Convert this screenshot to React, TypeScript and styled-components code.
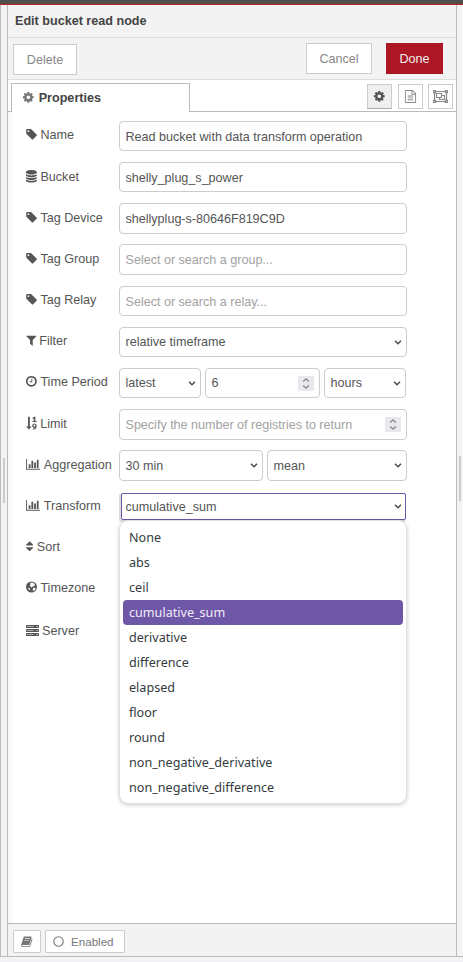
import React from 'react';
import styled, { createGlobalStyle, css } from 'styled-components';

const GlobalStyle = createGlobalStyle`
  * { box-sizing: border-box; }
  body {
    margin: 0;
    background: #f3f3f5;
    color: #555;
    font: 12.6px/18px "Liberation Sans", Arial, sans-serif;
  }
`;

/* ---------- icons ---------- */

const Glyph = styled.svg<{ $w?: number; $h?: number }>`
  display: block;
  flex: none;
  width: ${p => p.$w ?? 12.6}px;
  height: ${p => p.$h ?? 12.6}px;
  fill: currentColor;
`;

const paths = {
  tag: 'M576 448q0-53-37.5-90.5t-90.5-37.5-90.5 37.5-37.5 90.5 37.5 90.5 90.5 37.5 90.5-37.5 37.5-90.5zm1067 576q0 53-37 90l-491 492q-39 37-91 37-53 0-90-37l-715-716q-38-37-64.5-101t-26.5-117v-416q0-52 38-90t90-38h416q53 0 117 26.5t102 64.5l715 714q37 39 37 91z',
  database: 'M896 768q237 0 443-43t325-127v170q0 69-103 128t-280 93.5-385 34.5-385-34.5-280-93.5-103-128v-170q119 84 325 127t443 43zm0 768q237 0 443-43t325-127v170q0 69-103 128t-280 93.5-385 34.5-385-34.5-280-93.5-103-128v-170q119 84 325 127t443 43zm0-384q237 0 443-43t325-127v170q0 69-103 128t-280 93.5-385 34.5-385-34.5-280-93.5-103-128v-170q119 84 325 127t443 43zm0-1152q208 0 385 34.5t280 93.5 103 128v128q0 69-103 128t-280 93.5-385 34.5-385-34.5-280-93.5-103-128v-128q0-69 103-128t280-93.5 385-34.5z',
  filter: 'M1595 295q17 41-14 70l-493 493v742q0 42-39 59-13 5-25 5-27 0-45-19l-256-256q-19-19-19-45v-486l-493-493q-31-29-14-70 17-39 59-39h1280q42 0 59 39z',
  clock: 'M1024 544v448q0 14-9 23t-23 9h-320q-14 0-23-9t-9-23v-64q0-14 9-23t23-9h224v-352q0-14 9-23t23-9h64q14 0 23 9t9 23zm416 352q0-148-73-273t-198-198-273-73-273 73-198 198-73 273 73 273 198 198 273 73 273-73 198-198 73-273zm224 0q0 209-103 385.5t-279.5 279.5-385.5 103-385.5-103-279.5-279.5-103-385.5 103-385.5 279.5-279.5 385.5-103 385.5 103 279.5 279.5 103 385.5z',
  cog: 'M1152 896q0-106-75-181t-181-75-181 75-75 181 75 181 181 75 181-75 75-181zm512-109v222q0 12-8 23t-20 13l-185 28q-19 54-39 91 35 50 107 138 10 12 10 25t-9 23q-27 37-99 108t-94 71q-12 0-26-9l-138-108q-44 23-91 38-16 136-29 186-7 28-36 28h-222q-14 0-24.500-8.500t-11.500-21.500l-28-184q-49-16-90-37l-141 107q-10 9-25 9-14 0-25-11-126-114-165-168-7-10-7-23 0-12 8-23 15-21 51-66.500t54-70.500q-27-50-41-99l-183-27q-13-2-21-12.500t-8-23.500v-222q0-12 8-23t19-13l186-28q14-46 39-92-40-57-107-138-10-12-10-24 0-10 9-23 26-36 98.500-107.500t94.500-71.500q13 0 26 10l138 107q44-23 91-38 16-136 29-186 7-28 36-28h222q14 0 24.500 8.500t11.500 21.500l28 184q49 16 90 37l142-107q9-9 24-9 13 0 25 10 129 119 165 170 7 8 7 22 0 12-8 23-15 21-51 66.500t-54 70.500q26 50 41 98l183 28q13 2 21 12.500t8 23.500z',
  file: 'M1596 380q28 28 48 76t20 88v1152q0 40-28 68t-68 28h-1344q-40 0-68-28t-28-68v-1600q0-40 28-68t68-28h896q40 0 88 20t76 48zm-444-244v376h376q-10-29-22-41l-313-313q-12-12-41-22zm384 1528v-1024h-416q-40 0-68-28t-28-68v-416h-768v1536h1280zm-1024-864q0-14 9-23t23-9h704q14 0 23 9t9 23v64q0 14-9 23t-23 9h-704q-14 0-23-9t-9-23v-64zm736 224q14 0 23 9t9 23v64q0 14-9 23t-23 9h-704q-14 0-23-9t-9-23v-64q0-14 9-23t23-9h704zm0 256q14 0 23 9t9 23v64q0 14-9 23t-23 9h-704q-14 0-23-9t-9-23v-64q0-14 9-23t23-9h704z',
};

const TagIcon = () => <Glyph viewBox="100 0 1792 1792"><path d={paths.tag} /></Glyph>;
const DatabaseIcon = () => <Glyph viewBox="128 0 1792 1792"><path d={paths.database} /></Glyph>;
const FilterIcon = () => <Glyph viewBox="128 0 1792 1792"><path d={paths.filter} /></Glyph>;
const ClockIcon = () => <Glyph viewBox="128 0 1792 1792"><path d={paths.clock} /></Glyph>;
const CogIcon = () => <Glyph viewBox="0 0 1792 1792"><path d={paths.cog} /></Glyph>;
const ChartIcon = () => (
  <Glyph $w={14.4} viewBox="0 0 2048 1792">
    <path d="M640 896v512h-256v-512h256zm384-512v1024h-256v-1024h256zm1024 1152v128h-2048v-1536h128v1408h1920zm-640-896v768h-256v-768h256zm384-384v1152h-256v-1152h256z" />
  </Glyph>
);
const SortIcon = () => (
  <Glyph $w={7.2} viewBox="384 0 1024 1792">
    <path d="M1408 1088q0 26-19 45l-448 448q-19 19-45 19t-45-19l-448-448q-19-19-19-45t19-45 45-19h896q26 0 45 19t19 45zm0-384q0 26-19 45t-45 19h-896q-26 0-45-19t-19-45 19-45l448-448q19-19 45-19t45 19l448 448q19 19 19 45z" />
  </Glyph>
);
const NumericIcon = () => (
  <Glyph $w={11} $h={14} viewBox="0 0 11 14">
    <path d="M2 .8h1.800v9.600h1.900L2.900 13.400.1 10.400H2z" />
    <path d="M6.500 2 8.100.8h1.300v4.100h1.200v1.100H6.500V4.900h1.300V2.500l-1.300.6z" />
    <path fillRule="evenodd" d="M8.400 7.400c1.400 0 2.200 1.100 2.200 2.700 0 2.200-1 3.500-2.700 3.500l-1.200-.2.300-1c1.200.3 1.900 0 2.100-.9-1.500.6-2.900-.2-2.900-1.800 0-1.300.9-2.300 2.200-2.300zm0 1.100c-.6 0-.9.5-.9 1.100s.4.900 1 .9.800-.3.800-.8c0-.7-.4-1.200-.9-1.200z" />
  </Glyph>
);
const GlobeIcon = () => (
  <Glyph $w={11} $h={12} viewBox="0 0 11 12">
    <path fillRule="evenodd" d="M5.500.5a5.500 5.500 0 1 1 0 11 5.500 5.500 0 0 1 0-11zM4.600 1.700 5.800 1.400 7 1.800 8.200 2.500 8.900 3.500 8.200 4 9 4.700 8.200 5.200 7 4.900 6.300 6 5.300 6.600 4.600 6 5.200 4.900 4.200 5.200 3.700 4.300 4.600 3.400 4.100 2.600zM7.300 6.600 9 7 9.700 7.500 8.900 9 7.500 10 6.700 9.300 7 8.300zM2 6.400 3.500 7 4.200 8.100 3.800 9.200 2.900 8.400z" />
  </Glyph>
);
const ServerIcon = () => (
  <Glyph $w={13} $h={11} viewBox="0 0 13 11">
    {[0, 4, 8].map(y => (
      <g key={y}>
        <rect x="0" y={y} width="13" height="3" rx=".4" />
        <rect x="1" y={y + 1} width="6.500" height="1" fill="#fff" opacity=".5" />
        <rect x="10.500" y={y + 1} width="1.300" height="1" fill="#fff" opacity=".8" />
      </g>
    ))}
  </Glyph>
);
const GroupIcon = () => (
  <Glyph $w={15} $h={13} viewBox="0 0 15 13">
    <g fill="none" stroke="currentColor" strokeWidth="1.200">
      <path d="M3 1.500h9M3 11.500h9M1.500 3v7M13.500 3v7" />
      <path d="M.6.600h2v2h-2zM12.400.600h2v2h-2zM.6 10.400h2v2h-2zM12.400 10.400h2v2h-2z" />
      <path d="M3.500 3.500h5v4h-5zM9 5.500h2.500v4h-5V8" />
    </g>
  </Glyph>
);
const BookIcon = () => (
  <Glyph $w={12} $h={11} viewBox="0 0 12 11">
    <path fillRule="evenodd" d="M3.600.4h6.100c.8 0 1 .5.8 1.100L8.400 8.300c-.2.600-.6.800-1.200.8H1.400c-.6 0-.6.8.1.800h6.300c.4 0 .7-.2.800-.5l2.200-7c.6.2.8.6.6 1.200L9.400 9.700c-.2.700-.8 1.100-1.500 1.100H1.500C.5 10.800-.1 9.800.2 9L2.400 1.500c.2-.7.6-1.100 1.200-1.100zm.5 1.900-.2.600h4.600l.2-.6zm-.6 1.900-.2.600h4.600l.2-.6z" />
  </Glyph>
);
const CircleIcon = () => (
  <Glyph $w={11} $h={11} viewBox="0 0 11 11">
    <circle cx="5.500" cy="5.500" r="4.700" fill="none" stroke="currentColor" strokeWidth="1.100" />
  </Glyph>
);
const Chevron = () => (
  <Glyph $w={8} $h={5} viewBox="0 0 8 5">
    <path d="M1 .8l3 3 3-3" fill="none" stroke="#4c4c4c" strokeWidth="1.500" />
  </Glyph>
);

/* ---------- frame ---------- */

const Page = styled.div`
  display: flex;
  flex-direction: column;
  height: 962px;
  overflow: hidden;
`;
const TopBar = styled.div`
  flex: none;
  height: 5px;
  background: #4f4f4f;
  border-bottom: 1px solid #c02020;
`;
const Workspace = styled.div`
  display: flex;
  height: 952px;
  border-bottom: 1px solid #bbb;
`;
const Gutter = styled.div<{ $side: 'left' | 'right' }>`
  flex: none;
  width: ${p => (p.$side === 'left' ? 7 : 6)}px;
  background: #f3f3f3;
  ${p => p.$side === 'left' && css`border-left: 1px solid #bbb;`}
  padding: ${p => (p.$side === 'left' ? '453px 0 0 2px' : '451px 0 0 2px')};
`;
const Grip = styled.div`
  width: 2px;
  height: 45px;
  background: #ccc;
`;
const Tray = styled.main`
  display: flex;
  flex-direction: column;
  width: 450px;
  border: solid #bbb;
  border-width: 0 1px;
  background: #fff;
`;
const Header = styled.header`
  height: 33px;
  padding: 7px 7px 0;
  background: #f3f3f3;
  border-bottom: 1px solid #ddd;
  color: #444;
  font-weight: bold;
`;
const Toolbar = styled.div`
  display: flex;
  align-items: flex-start;
  height: 42px;
  padding: 5px 13px 0 5px;
  background: #f3f3f3;
  border-bottom: 1px solid #ddd;
`;
const Button = styled.button<{ $primary?: boolean; $width: number }>`
  width: ${p => p.$width}px;
  height: 31px;
  padding: 0;
  border: 1px solid ${p => (p.$primary ? '#ad1625' : '#ccc')};
  background: ${p => (p.$primary ? '#ad1625' : '#fff')};
  color: ${p => (p.$primary ? '#eee' : '#888')};
  font: inherit;
`;
const DeleteButton = styled(Button)`
  margin: 1px auto 0 0;
`;
const CancelButton = styled(Button)`
  margin-right: 14px;
`;

const TabBar = styled.div`
  display: flex;
  flex: none;
  height: 32px;
  padding: 3px 3px 0;
  box-shadow: inset 0 -1px #bbb;
`;
const Tab = styled.div`
  display: flex;
  align-items: center;
  gap: 4.500px;
  width: 179px;
  height: 29px;
  padding-left: 9.600px;
  margin-right: auto;
  border: 1px solid #bbb;
  border-bottom: 0;
  background: #fff;
  color: #444;
  font-weight: bold;
  svg { color: #777; margin-top: -1px; }
`;
const TabButton = styled.button<{ $active?: boolean }>`
  display: flex;
  align-items: center;
  justify-content: center;
  width: 25px;
  height: 25px;
  margin: 1px 0 0 5px;
  padding: 0;
  border: 1px solid #ccc;
  background: ${p => (p.$active ? '#efefef' : '#fff')};
  color: ${p => (p.$active ? '#555' : '#888')};
  ${p => p.$active && css`border-bottom-color: #aaa; margin-right: 1px;`}
`;

/* ---------- form ---------- */

const Form = styled.form`
  flex: 1;
  padding: 9px 0 0 18px;
  background: linear-gradient(to right, #f8f8f8, #fff 6px);
`;
const Row = styled.div<{ $h: number }>`
  display: flex;
  align-items: flex-start;
  height: ${p => p.$h}px;
`;
const Label = styled.label<{ $drop?: number; $gap?: number }>`
  display: flex;
  align-items: center;
  gap: ${p => p.$gap ?? 1.8}px;
  flex: none;
  width: 93px;
  height: 18px;
  margin-top: ${p => 5 + (p.$drop ?? 0)}px;
  white-space: nowrap;
  svg { margin-top: -1.200px; }
`;
const Controls = styled.div`
  display: flex;
  gap: 4px;
  position: relative;
`;
const box = css<{ $width?: number; $tall?: boolean }>`
  width: ${p => p.$width ?? 288}px;
  height: ${p => (p.$tall ? 31 : 30)}px;
  border: 1px solid #ccc;
  border-radius: 4px;
  background: #fff;
  color: #555;
  font: inherit;
`;
const TextInput = styled.input`
  ${box}
  padding: ${p => (p.$tall ? 0 : 1)}px 5.500px 0;
  letter-spacing: -0.014px;
  outline: 0;
  &::placeholder { color: #a2a2a2; }
`;
const SelectBox = styled.div<{ $focus?: boolean }>`
  ${box}
  display: flex;
  align-items: center;
  justify-content: space-between;
  padding: 0 4px 0 5.500px;
  ${p => p.$focus && css`
    width: 285px;
    height: 27px;
    margin: 2px 0 0 2px;
    padding: 0 3px 0 3.500px;
    border-color: #6f57a8;
    border-radius: 2px;
    box-shadow: -1px 1px 0 1px #ddd;
  `}
`;
const NumberBox = styled.div`
  ${box}
  display: flex;
  align-items: center;
  justify-content: space-between;
  padding: 0 5px 0 5.500px;
`;
const Hint = styled.span`
  color: #a2a2a2;
  letter-spacing: -0.02px;
`;
const Spinner = styled.span`
  display: flex;
  align-items: center;
  justify-content: center;
  width: 16px;
  height: 15px;
  background: #e9e9ed;
`;
const SpinnerArrows = () => (
  <Spinner>
    <Glyph $w={8} $h={13} viewBox="0 0 8 13">
      <path d="M1.200 4.500 4 1.800l2.800 2.700M1.200 8.500 4 11.200l2.800-2.700" fill="none" stroke="#85858c" strokeWidth="1.300" />
    </Glyph>
  </Spinner>
);

const Menu = styled.ul`
  position: absolute;
  top: 30px;
  left: 1px;
  width: 286px;
  margin: 0;
  padding: 4px 3px 3px;
  list-style: none;
  border-radius: 8px;
  background: #fff;
  box-shadow: 0 0 0 1px #e2e2e2, 0 1px 5px rgba(0, 0, 0, 0.3);
  color: #333b40;
  font: 12.6px/25px "Noto Sans", sans-serif;
`;
const Option = styled.li<{ $selected?: boolean }>`
  height: 25px;
  padding-left: 6px;
  border-radius: 4px;
  ${p => p.$selected && css`
    background: #6f57a8;
    color: #f0edf7;
  `}
`;

const Footer = styled.footer`
  display: flex;
  gap: 4px;
  flex: none;
  height: 33px;
  padding: 6px 5px 0;
  border-top: 1px solid #bbb;
  background: #f3f3f3;
`;
const FooterButton = styled.button<{ $width: number }>`
  display: flex;
  align-items: center;
  padding: 0 0 0 7px;
  gap: 7px;
  width: ${p => p.$width}px;
  height: 23px;
  border: 1px solid #ccc;
  border-radius: 1px;
  background: #fff;
  color: #777;
  font: 11.6px/20px "Liberation Sans", Arial, sans-serif;
`;

const transforms = [
  'None', 'abs', 'ceil', 'cumulative_sum', 'derivative', 'difference', 'elapsed',
  'floor', 'round', 'non_negative_derivative', 'non_negative_difference',
];

const Select = ({ value, ...rest }: { value: string; $width?: number; $tall?: boolean; $focus?: boolean }) => (
  <SelectBox {...rest}><span>{value}</span><Chevron /></SelectBox>
);

export default function App() {
  return (
    <>
      <GlobalStyle />
      <Page>
        <TopBar />
        <Workspace>
          <Gutter $side="left"><Grip /></Gutter>
          <Tray>
            <Header>Edit bucket read node</Header>
            <Toolbar>
              <DeleteButton $width={64}>Delete</DeleteButton>
              <CancelButton $width={66}>Cancel</CancelButton>
              <Button $primary $width={57}>Done</Button>
            </Toolbar>
            <TabBar>
              <Tab><CogIcon />Properties</Tab>
              <TabButton $active><CogIcon /></TabButton>
              <TabButton><Glyph $w={13} $h={13} viewBox="0 0 1792 1792"><path d={paths.file} /></Glyph></TabButton>
              <TabButton><GroupIcon /></TabButton>
            </TabBar>
            <Form>
              <Row $h={41}>
                <Label><TagIcon />Name</Label>
                <TextInput defaultValue="Read bucket with data transform operation" />
              </Row>
              <Row $h={41}>
                <Label $drop={1}><DatabaseIcon />Bucket</Label>
                <TextInput defaultValue="shelly_plug_s_power" />
              </Row>
              <Row $h={41}>
                <Label $drop={1}><TagIcon />Tag Device</Label>
                <TextInput $tall defaultValue="shellyplug-s-80646F819C9D" />
              </Row>
              <Row $h={42}>
                <Label $drop={1}><TagIcon />Tag Group</Label>
                <TextInput $tall placeholder="Select or search a group..." />
              </Row>
              <Row $h={41}>
                <Label><TagIcon />Tag Relay</Label>
                <TextInput placeholder="Select or search a relay..." />
              </Row>
              <Row $h={41}>
                <Label $gap={0.6}><FilterIcon />Filter</Label>
                <Select value="relative timeframe" />
              </Row>
              <Row $h={41}>
                <Label><ClockIcon />Time Period</Label>
                <Controls>
                  <Select $width={82} value="latest" />
                  <NumberBox $width={115}>6<SpinnerArrows /></NumberBox>
                  <Select $width={82} value="hours" />
                </Controls>
              </Row>
              <Row $h={41}>
                <Label $drop={1} $gap={3.2}><NumericIcon />Limit</Label>
                <NumberBox $tall><Hint>Specify the number of registries to return</Hint><SpinnerArrows /></NumberBox>
              </Row>
              <Row $h={41}>
                <Label $drop={1} $gap={3.4}><ChartIcon />Aggregation</Label>
                <Controls>
                  <Select $tall $width={144} value="30 min" />
                  <Select $tall $width={140} value="mean" />
                </Controls>
              </Row>
              <Row $h={41}>
                <Label $drop={1} $gap={3.4}><ChartIcon />Transform</Label>
                <Controls>
                  <Select $focus value="cumulative_sum" />
                  <Menu>
                    {transforms.map(name => (
                      <Option key={name} $selected={name === 'cumulative_sum'}>{name}</Option>
                    ))}
                  </Menu>
                </Controls>
              </Row>
              <Row $h={41}>
                <Label $drop={1} $gap={3.6}><SortIcon />Sort</Label>
              </Row>
              <Row $h={43}>
                <Label $drop={1} $gap={3.4}><GlobeIcon />Timezone</Label>
              </Row>
              <Row $h={41}>
                <Label $drop={1} $gap={3}><ServerIcon />Server</Label>
              </Row>
            </Form>
            <Footer>
              <FooterButton $width={28}><BookIcon /></FooterButton>
              <FooterButton $width={80}><CircleIcon />Enabled</FooterButton>
            </Footer>
          </Tray>
          <Gutter $side="right"><Grip /></Gutter>
        </Workspace>
      </Page>
    </>
  );
}
